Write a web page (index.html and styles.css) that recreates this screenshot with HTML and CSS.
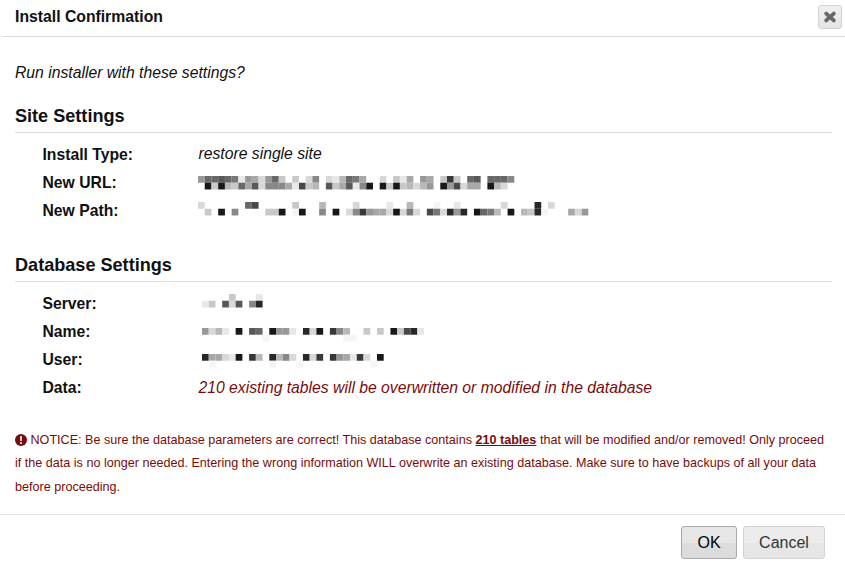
FILE: index.html
```
<!DOCTYPE html>
<html lang="en">
<head>
<meta charset="utf-8">
<title>Install Confirmation</title>
<link rel="stylesheet" href="styles.css">
</head>
<body>
<div class="dialog">
  <header class="dialog-header">
    <h1 class="dialog-title">Install Confirmation</h1>
    <button class="close" aria-label="Close">
      <svg width="14" height="14" viewBox="0 0 14 14"><path d="M3.2 3.6L10.8 10.4M10.8 3.6L3.2 10.4" stroke="#686868" stroke-width="3.8" stroke-linecap="round"/></svg>
    </button>
  </header>
  <main class="dialog-body">
    <p class="question">Run installer with these settings?</p>
    <section class="group">
      <h2>Site Settings</h2>
      <dl>
        <dt>Install Type:</dt><dd><em>restore single site</em></dd>
        <dt>New URL:</dt><dd><svg class="mosaic url" data-top="966567e9ad96c.c.d8.deb67a..d.cea.9a.c3c.65.6668" data-bottom=".1c1bc6a5d888ae4cb.5ca5e81.1c1cbdb9.194daa.1bd"></svg></dd>
        <dt>New Path:</dt><dd><svg class="mosaic path" data-top="d......64.....c...b....d....e..b...f..e......d....2.d" data-bottom=".c.1.8....cc1.f1..8.1.d839aad1d7d.47d292.167b.1.bc2f...ad9"></svg></dd>
      </dl>
    </section>
    <section class="group">
      <h2>Database Settings</h2>
      <dl>
        <dt>Server:</dt><dd><svg class="mosaic server" data-top="....c...e" data-bottom="ec.5d5.82"></svg></dd>
        <dt>Name:</dt><dd><svg class="mosaic name" data-top="9dbe.1.56.199e.2d1.38b..c.c.1c42e" data-bottom=".........f...........ff"></svg></dd>
        <dt>User:</dt><dd><svg class="mosaic user" data-top="2aade1.3b.2b8d.2d3.39ae3d.1" data-bottom=".f........f...f..........f"></svg></dd>
        <dt class="last">Data:</dt><dd><em class="danger">210 existing tables will be overwritten or modified in the database</em></dd>
      </dl>
    </section>
    <p class="notice"><svg class="alert" width="12" height="12" viewBox="0 0 12 12"><circle cx="6" cy="6" r="6" fill="#780c0c"/><path d="M5 2.3h2L6.7 7H5.3z" fill="#fff"/><circle cx="6" cy="8.9" r="1" fill="#fff"/></svg> NOTICE: Be sure the database parameters are correct! This database contains <b>210 tables</b> that will be modified and/or removed! Only proceed<br>if the data is no longer needed. Entering the wrong information WILL overwrite an existing database. Make sure to have backups of all your data<br>before proceeding.</p>
  </main>
  <footer class="dialog-footer">
    <button class="btn ok">OK</button>
    <button class="btn cancel">Cancel</button>
  </footer>
</div>
<script src="mosaic.js"></script>
</body>
</html>
```
FILE: styles.css
```
* { box-sizing: border-box; }
body {
  margin: 0;
  background: #fff;
  color: #111;
  font: 15.73px/28.2px "Liberation Sans", Arial, sans-serif;
}
.dialog { height: 571px; display: flex; flex-direction: column; overflow: hidden; }
.dialog-header {
  height: 37px;
  padding: 0 3px 0 15px;
  display: flex;
  align-items: flex-start;
  justify-content: space-between;
  border-bottom: 1px solid #ddd;
  border-radius: 0 0 0 3px;
}
.dialog-title { margin: 0; font-size: 15.75px; line-height: 33px; }
.close {
  width: 24px;
  height: 24px;
  margin-top: 5px;
  padding: 0;
  display: grid;
  place-items: center;
  border: 1px solid #d3d3d3;
  border-radius: 3px;
  background: linear-gradient(#f0f0f0, #e4e4e4);
}
.dialog-body { flex: 1; padding: 0 13px 0 15px; }
.question { height: 28px; margin: 21px 0 0; font-style: italic; line-height: 29px; }
h2 {
  margin: 0 0 7px;
  height: 33px;
  font-size: 18.1px;
  line-height: 32px;
  border-bottom: 1px solid #ddd;
}
.group { margin-top: 14px; }
.group + .group { margin-top: 24.4px; }
dl { margin: 0; display: grid; grid-template-columns: 156px 1fr; grid-auto-rows: 28.2px; padding-left: 27.5px; }
dt { font-weight: bold; line-height: 29.2px; }
dt.last { line-height: 28.2px; }
dd { margin: 0; }
.danger { color: #780c0c; }
.mosaic { display: block; width: 600px; height: 14px; }
.url, .path { margin-left: -0.5px; }
.url { margin-top: 7.4px; }
.path { margin-top: 6px; }
.server, .name, .user { margin-left: 3px; }
.server { margin-top: 5.2px; }
.name { margin-top: 10.5px; }
.user { margin-top: 9px; }
.notice { margin: 27px -10px 0 0; color: #780c0c; font-size: 12.6px; line-height: 23.6px; white-space: nowrap; }
.notice b { text-decoration: underline; }
.alert { vertical-align: -2px; }
.dialog-footer {
  height: 57px;
  padding: 11px 20px 0;
  display: flex;
  justify-content: flex-end;
  gap: 6px;
  border-top: 1px solid #e4e4e4;
}
.btn {
  height: 33px;
  padding: 0;
  border: 1px solid #d3d3d3;
  border-radius: 3px;
  color: #333;
  font: 16px "Liberation Sans", Arial, sans-serif;
  background: linear-gradient(#ececec 50%, #e6e6e6 50%);
}
.ok { width: 56px; color: #000; border-color: #aaa; background: linear-gradient(#e6e6e6 50%, #dcdcdc 50%); }
.cancel { width: 82px; }
```
FILE: mosaic.js
```
// Each character is one cell's grey level in hex; dots mark clear cells.
const CELL = 6.73;
document.querySelectorAll(".mosaic").forEach((svg) => {
  [svg.dataset.top, svg.dataset.bottom].forEach((row, y) => {
    [...row].forEach((level, x) => {
      if (level === ".") return;
      const rect = document.createElementNS("http://www.w3.org/2000/svg", "rect");
      const value = level === "f" ? 245 : parseInt(level, 16) * 16 + 8;
      rect.setAttribute("x", x * CELL);
      rect.setAttribute("y", y * CELL);
      rect.setAttribute("width", CELL);
      rect.setAttribute("height", CELL);
      rect.setAttribute("fill", `rgb(${value},${value},${value})`);
      svg.appendChild(rect);
    });
  });
});
```
